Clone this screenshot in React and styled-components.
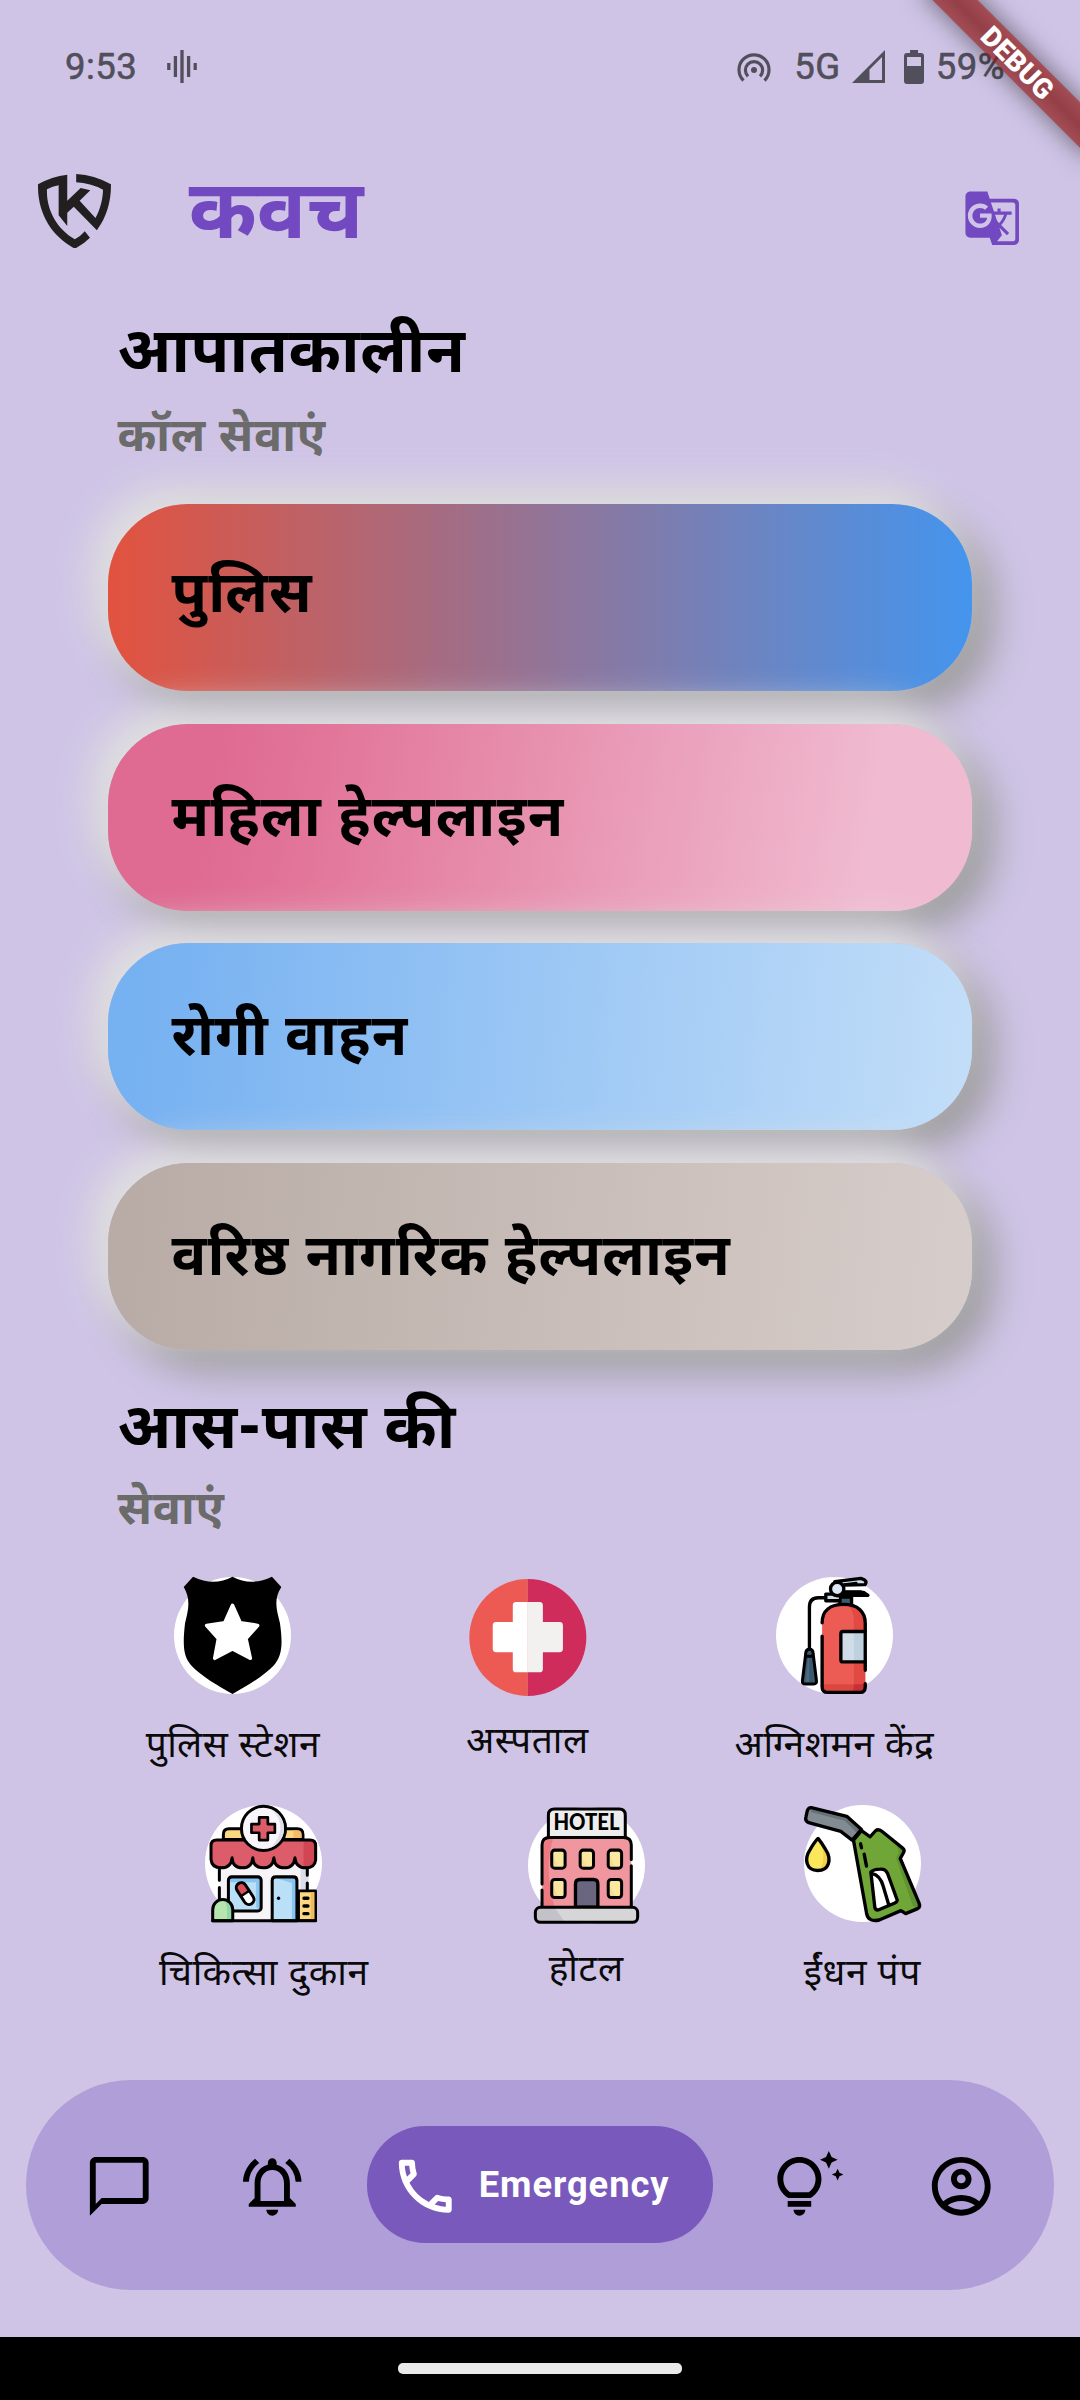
import React from "react";
import styled, { createGlobalStyle } from "styled-components";
import {
  MdOutlineChatBubbleOutline,
  MdOutlineNotificationsActive,
  MdOutlinePhone,
  MdOutlineTipsAndUpdates,
  MdOutlineAccountCircle,
  MdGTranslate,
} from "react-icons/md";

const GlobalStyle = createGlobalStyle`
  body { margin: 0; background: #cfc4e6; }
  * { box-sizing: border-box; }
`;

const hindi = `"Noto Sans Devanagari", "Noto Sans", sans-serif`;

const Page = styled.div`
  position: relative;
  display: flex;
  flex-direction: column;
  width: 1080px;
  height: 2400px;
  overflow: hidden;
  background: #cfc4e6;
  font-family: ${hindi};
  color: #000;
`;

const StatusBar = styled.div`
  display: flex;
  justify-content: space-between;
  align-items: center;
  height: 132px;
  padding: 1px 75px 0 65px;
  color: #524f5c;
  font: 400 36.5px/44px Roboto, sans-serif;
  -webkit-text-stroke: 0.6px #524f5c;
  letter-spacing: 0.5px;
`;

const StatusGroup = styled.div`
  display: flex;
  align-items: center;
  svg { display: block; }
`;

const Gap = styled.span`
  width: ${(p) => p.$w}px;
`;

const DebugBanner = styled.div`
  position: absolute;
  top: 46px;
  left: 897px;
  width: 240px;
  height: 32px;
  padding-left: 2px;
  transform: rotate(45deg);
  background: linear-gradient(rgba(144, 27, 24, 0.7), rgba(123, 7, 3, 0.7) 50%, rgba(144, 27, 24, 0.7));
  box-shadow: 0 0 26px rgba(0, 0, 0, 0.5);
  color: #fff;
  font: 900 28px/33px Roboto, sans-serif;
  text-align: center;
`;

const AppBar = styled.header`
  display: flex;
  align-items: center;
  height: 168px;
  padding: 0 58.5px 10px 38px;
`;

const Title = styled.h1`
  flex: 1;
  margin: 0 0 0 77.5px;
  padding-top: 13px;
  font-size: 82px;
  line-height: 120px;
  font-weight: 700;
  color: #7349c1;
`;

const TranslateButton = styled.div`
  display: flex;
  padding-top: 14px;
`;

const SectionHeader = styled.div`
  display: flex;
  flex-direction: column;
  height: ${(p) => p.$height}px;
  padding: ${(p) => p.$top}px 0 0 117.5px;
`;

const SectionTitle = styled.h2`
  margin: 0;
  font-size: 63.25px;
  line-height: 90px;
  font-weight: 700;
  letter-spacing: 0.6px;
`;

const SectionSubtitle = styled.p`
  margin: 0;
  font-size: 46.75px;
  line-height: ${(p) => p.$line}px;
  font-weight: 700;
  letter-spacing: 0.7px;
  color: #6b6b6b;
`;

const CardList = styled.div`
  display: flex;
  flex-direction: column;
  gap: 32.6px;
  padding: 0 108px;
`;

const CallCard = styled.div`
  display: flex;
  align-items: center;
  height: 187px;
  padding: ${(p) => p.$drop}px 63.5px 0;
  border-radius: 80px;
  background: ${(p) => p.$fill};
  box-shadow: -14px -14px 36px 3px #e0e0e0, 16px 16px 38px 4px #999999;
  font-size: 57.75px;
  line-height: 80px;
  font-weight: 700;
  letter-spacing: 1.15px;
`;

const ServiceRow = styled.div`
  display: flex;
  justify-content: space-evenly;
  height: 228px;
`;

const Service = styled.div`
  display: flex;
  flex-direction: column;
  align-items: center;
  padding-top: ${(p) => p.$drop || 0}px;
  svg { display: block; width: 117px; height: 117px; overflow: visible; }
`;

const ServiceLabel = styled.span`
  margin-top: ${(p) => p.$top}px;
  font-size: 37.1px;
  line-height: 56px;
  letter-spacing: 0.65px;
  color: #0a0a0a;
`;

const BottomNav = styled.nav`
  display: flex;
  align-items: center;
  height: 210px;
  margin: 47px 26px 0 25.5px;
  padding: 0 58.75px;
  border-radius: 105px;
  background: #b09ed9;
  svg { display: block; flex: none; }
`;

const NavItem = styled.div`
  display: flex;
  margin-right: ${(p) => p.$after || 0}px;
  padding-top: 2px;
`;

const ActiveItem = styled.div`
  display: flex;
  flex: none;
  align-items: center;
  width: 346px;
  height: 117px;
  margin: 0 59.5px 0 59.25px;
  padding-left: 23.2px;
  border-radius: 58px;
  background: #7a59bc;
  color: #fff;
  font: 700 36.3px/44px Roboto, sans-serif;
  letter-spacing: 0.95px;
  svg { margin: 2px 18px 0 0; }
`;

const GestureBar = styled.div`
  display: flex;
  justify-content: center;
  height: 63px;
  margin-top: auto;
  padding-top: 26px;
  background: #000;
`;

const Handle = styled.div`
  width: 284px;
  height: 11px;
  border-radius: 5px;
  background: #eaeaea;
`;

const WaveIcon = () => (
  <svg width="30" height="33" viewBox="0 0 30 33" stroke="#524f5c" strokeWidth="3.3">
    <path d="M1.8 13v7M8.4 6v21M15 0v33M21.6 6v21M28.2 13v7" />
  </svg>
);

const HotspotIcon = () => (
  <svg width="34" height="30" viewBox="0 0 34 30" fill="none" stroke="#524f5c" strokeWidth="3.2">
    <circle cx="17" cy="18" r="3" fill="#524f5c" stroke="none" />
    <path d="M6.5 28.5A15 15 0 1 1 27.5 28.5" />
    <path d="M11 24.3A8.6 8.6 0 1 1 23 24.3" />
  </svg>
);

const SignalIcon = () => (
  <svg width="33" height="33" viewBox="0 0 33 33" fill="#524f5c">
    <path fillRule="evenodd" d="M33 0V33H0ZM30 7L17.5 19.5V30H30Z" />
  </svg>
);

const BatteryIcon = () => (
  <svg width="20" height="34" viewBox="0 0 20 34" fill="#524f5c">
    <path fillRule="evenodd" d="M6 0H14V3H17Q20 3 20 6V31Q20 34 17 34H3Q0 34 0 31V6Q0 3 3 3H6ZM3 7V16H17V7Z" />
  </svg>
);

const ShieldLogo = () => (
  <svg width="73.3" height="74.7" viewBox="110 521 213 224" preserveAspectRatio="none" fill="#221f20">
    <path d="M195 523Q150 528 110 552C108 640 150 708 217 745Q242 732 261 712L246 693Q233 709 217 717C165 685 134 630 136 567Q152 558 170 555V645L195 677V637L214 619L281 690C310 650 323 600 322 552Q275 524 221 521V546Q262 548 299 568C298 600 290 628 277 653L231 601L262 570L234 563L195 601Z" />
  </svg>
);

const PoliceIcon = () => (
  <svg viewBox="165 52 350 350">
    <circle cx="340" cy="227" r="175" fill="#fff" />
    <path d="M222 51Q284 81 340 51Q396 81 458 51L486 82C462 120 472 150 482 190C492 260 486 290 464 316C432 350 385 376 340 402C295 376 248 350 216 316C194 290 190 260 198 190C208 150 216 120 194 82Z" />
    <path d="M340 137L363 189L415 197L380 236L393 295L340 267L287 295L298 236L263 197L317 189Z" fill="#fff" stroke="#fff" strokeWidth="11" strokeLinejoin="round" />
  </svg>
);

const HospitalIcon = () => (
  <svg viewBox="88 57 350 350">
    <path d="M264 57A175 175 0 0 0 264 407Z" fill="#ec5a53" />
    <path d="M264 57A175 175 0 0 1 264 407Z" fill="#cf2c5b" />
    <path d="M264 126H229Q219 126 219 136V186H169Q159 186 159 196V266Q159 276 169 276H219V326Q219 336 229 336H264Z" fill="#fff" />
    <path d="M264 126H299Q309 126 309 136V186H359Q369 186 369 196V266Q369 276 359 276H309V326Q309 336 299 336H264Z" fill="#f2f1ef" />
  </svg>
);

const FireIcon = () => (
  <svg viewBox="1008 52 350 350" strokeLinecap="round" strokeLinejoin="round">
    <circle cx="1183" cy="227" r="175" fill="#fff" />
    <path d="M1199 112H1234V136H1199Z" fill="#3b5a70" stroke="#000" strokeWidth="10" />
    <path d="M1146 190C1146 152 1170 134 1211 134C1252 134 1275 152 1275 190V380Q1275 397 1260 397H1161Q1146 397 1146 380Z" fill="#ec5b54" />
    <path d="M1220 136Q1241 148 1241 185V397H1260Q1275 397 1275 380V190Q1272 140 1220 136Z" fill="#e14a43" />
    <path d="M1150 373H1275V385Q1272 397 1260 397H1161Q1150 394 1150 373Z" fill="#dc4640" />
    <path d="M1241 373H1275V385Q1272 397 1260 397H1238Z" fill="#c73036" />
    <path d="M1202 217H1275V306H1202Z" fill="#d0dde9" />
    <path d="M1241 217H1275V306H1241Z" fill="#bfd1df" />
    <g fill="none" stroke="#000" strokeWidth="10">
      <path d="M1146 189C1146 152 1170 134 1211 134C1252 134 1275 155 1275 190V331" />
      <path d="M1146 229V380Q1146 397 1162 397H1260Q1275 397 1275 380V371" />
      <path d="M1275 215H1208Q1202 215 1202 222V300Q1202 306 1208 306H1275" />
      <path d="M1108 268V142Q1108 114 1135 114H1157" />
      <path d="M1190 103H1157V123H1199" fill="#d0dde9" />
      <path d="M1184 66L1262 56Q1284 62 1274 75L1213 76M1210 98H1270L1283 107H1206" fill="#d0dde9" />
    </g>
    <circle cx="1191" cy="88" r="20" fill="#dbe8f3" stroke="#000" strokeWidth="10" />
    <path d="M1213 75L1248 70M1213 96H1262" stroke="#000" strokeWidth="8" fill="none" />
    <path d="M1097 281Q1097 268 1108 268Q1119 268 1119 281L1129 362Q1130 372 1121 372H1096Q1086 372 1087 362Z" fill="#3b5a70" stroke="#000" strokeWidth="9" />
    <path d="M1104 294L1097 366H1107V294Z" fill="#4d6b7e" />
    <path d="M1098 289H1118" stroke="#000" strokeWidth="9" />
  </svg>
);

const PharmacyIcon = () => (
  <svg viewBox="198 75 350 350" strokeLinecap="round" strokeLinejoin="round">
    <circle cx="373" cy="250" r="175" fill="#fff" />
    <path d="M243 250H508V421H243Z" fill="#f6f4f7" />
    <path d="M484 250H508V330H484Z" fill="#dcdcea" />
    <path d="M253 178V163Q253 146 270 146H474Q491 146 491 163V178Z" fill="#fcd883" stroke="#000" strokeWidth="9" />
    <path d="M462 151H474Q487 151 487 163V174H462Z" fill="#f6bd66" />
    <path d="M216 197Q216 180 233 180H512Q529 180 529 197V240Q526 263 500 263Q470 263 467 233Q464 263 435 263Q406 263 404 233Q401 263 372 263Q343 263 341 233Q338 263 310 263Q281 263 279 233Q276 263 246 263Q218 263 216 238Z" fill="#dc5c69" />
    <path d="M493 182H512Q527 182 527 197V240Q524 260 500 261Q490 258 493 240Z" fill="#d04653" />
    <path d="M216 197Q216 180 233 180H512Q529 180 529 197V240Q526 263 500 263Q470 263 467 233Q464 263 435 263Q406 263 404 233Q401 263 372 263Q343 263 341 233Q338 263 310 263Q281 263 279 233Q276 263 246 263Q218 263 216 238Z" fill="none" stroke="#000" strokeWidth="9" />
    <circle cx="373" cy="145" r="66" fill="#f8f6fa" stroke="#000" strokeWidth="9" />
    <path d="M400 91Q450 145 395 202Q434 185 434 145Q432 108 400 91Z" fill="#dddded" />
    <path d="M360 112H386V132H407V158H386V180H360V158H337V132H360Z" fill="#dc5c69" stroke="#000" strokeWidth="8" />
    <path d="M241 268V300M241 322V360M504 265V285M504 308V330" stroke="#000" strokeWidth="9" fill="none" />
    <rect x="268" y="290" width="98" height="102" rx="10" fill="#b9e0f7" />
    <path d="M272 293H357Q364 293 364 300V388Q351 388 351 375V306H272Z" fill="#86c5f0" />
    <rect x="268" y="290" width="98" height="102" rx="10" fill="none" stroke="#000" strokeWidth="9" />
    <g transform="rotate(-33 318 340)">
      <rect x="303" y="304" width="30" height="72" rx="15" fill="#fff" />
      <path d="M303 340V319A15 15 0 0 1 333 319V340Z" fill="#dc4e5a" />
      <rect x="303" y="304" width="30" height="72" rx="15" fill="none" stroke="#000" strokeWidth="9" />
      <path d="M303 340H333" stroke="#000" strokeWidth="7" />
    </g>
    <path d="M399 421V301Q399 290 410 290H462Q473 290 473 301V421Z" fill="#b9e0f7" />
    <path d="M408 293H462Q470 294 470 301V420H458V308Z" fill="#86c5f0" />
    <path d="M399 421V301Q399 290 410 290H462Q473 290 473 301V421Z" fill="none" stroke="#000" strokeWidth="9" />
    <circle cx="418" cy="354" r="5" />
    <path d="M478 332H529V421H478Z" fill="#fcd883" stroke="#000" strokeWidth="8" />
    <path d="M514 336H525V417H514Z" fill="#f0bb5e" />
    <path d="M494 354H506M494 377H506M494 400H506" stroke="#000" strokeWidth="10" />
    <path d="M221 421V388A30 30 0 0 1 281 388V421Z" fill="#b6e6ab" />
    <path d="M256 361Q277 368 277 390V418H264V390Q264 370 256 361Z" fill="#8fd6a8" />
    <path d="M221 421V388A30 30 0 0 1 281 388V421Z" fill="none" stroke="#000" strokeWidth="9" />
    <path d="M221 421H529" stroke="#000" strokeWidth="9" />
  </svg>
);

const Window = ({ x, y }) => (
  <>
    <rect x={x} y={y} width="40" height="54" rx="9" fill="#fbe8a0" />
    <path d={`M${x + 4} ${y + 4}Q${x + 8} ${y + 40} ${x + 24} ${y + 50}H${x + 4}Z`} fill="#f5dc92" />
    <rect x={x} y={y} width="40" height="54" rx="9" fill="none" stroke="#000" strokeWidth="9" />
  </>
);

const HotelIcon = () => (
  <svg viewBox="85 80 350 350" strokeLinecap="round" strokeLinejoin="round">
    <circle cx="260" cy="255" r="175" fill="#fff" />
    <path d="M127 380V194Q127 171 150 171H371Q394 171 394 194V380Z" fill="#f0969e" />
    <path d="M131 380V194Q134 175 160 175Q132 260 164 380Z" fill="#ed7a80" />
    <path d="M127 310V194Q127 171 150 171H371Q394 171 394 194V237M127 328V380M394 256V380" fill="none" stroke="#000" strokeWidth="9" />
    <path d="M146 171V104Q146 86 164 86H358Q376 86 376 104V171Z" fill="#ededed" stroke="#000" strokeWidth="9" />
    <text x="260" y="150" textAnchor="middle" textLength="198" lengthAdjust="spacingAndGlyphs" fontFamily="Lato, sans-serif" fontWeight="900" fontSize="66">HOTEL</text>
    <Window x={156} y={209} />
    <Window x={241} y={209} />
    <Window x={325} y={209} />
    <Window x={156} y={297} />
    <Window x={325} y={297} />
    <path d="M227 380V310Q227 297 240 297H281Q294 297 294 310V380Z" fill="#6a6680" stroke="#000" strokeWidth="10" />
    <rect x="107" y="380" width="306" height="45" rx="15" fill="#d6d6d8" />
    <path d="M122 382H166L194 423H122Q109 420 109 402Q109 385 122 382Z" fill="#c3c2c8" />
    <rect x="107" y="380" width="306" height="45" rx="15" fill="none" stroke="#000" strokeWidth="9" />
  </svg>
);

const FuelIcon = () => (
  <svg viewBox="912 75 350 350" strokeLinecap="round" strokeLinejoin="round">
    <circle cx="1087" cy="250" r="175" fill="#fff" />
    <path d="M934 83L1040 109L1084 148L1056 180L1022 154L926 128Q914 122 918 110L922 92Q926 82 934 83Z" fill="#818b91" />
    <path d="M934 85L1040 111L1080 150L1072 160L1034 122L932 96Z" fill="#667077" />
    <path d="M934 83L1040 109L1084 148L1056 180L1022 154L926 128Q914 122 918 110L922 92Q926 82 934 83Z" fill="none" stroke="#000" strokeWidth="10" />
    <path d="M1084 152L1110 170L1126 152Q1134 146 1144 153L1207 204Q1214 210 1210 217L1200 235L1256 368Q1261 380 1252 385L1216 400L1202 391L1137 419Q1103 426 1099 398L1060 180Z" fill="#70a537" />
    <path d="M1190 198L1207 208L1200 235L1256 372L1246 382L1238 378L1188 236L1196 214Z" fill="#5f9330" />
    <path d="M1084 152L1110 170L1126 152Q1134 146 1144 153L1207 204Q1214 210 1210 217L1200 235L1256 368Q1261 380 1252 385L1216 400L1202 391L1137 419Q1103 426 1099 398L1060 180Z" fill="none" stroke="#000" strokeWidth="10" />
    <path d="M1112 276Q1120 267 1140 267Q1156 266 1162 280L1191 360Q1190 366 1184 368L1134 389Q1126 390 1124 382Z" fill="#fff" stroke="#000" strokeWidth="10" />
    <path d="M1116 280Q1140 285 1149 318L1165 372" fill="none" stroke="#000" strokeWidth="10" />
    <path d="M1081 191L1084 203M1092 222L1099 258" stroke="#000" strokeWidth="10" />
    <path d="M954 175Q964 187 976 207C997 239 986 271 953 271C920 271 910 239 931 207Q944 185 954 175Z" fill="#fbe75c" />
    <path d="M958 186Q980 225 962 267Q986 262 985 236Q980 215 958 186Z" fill="#f4cf4f" />
    <path d="M954 175Q964 187 976 207C997 239 986 271 953 271C920 271 910 239 931 207Q944 185 954 175Z" fill="none" stroke="#000" strokeWidth="10" />
  </svg>
);

const calls = [
  { text: "पुलिस", fill: "linear-gradient(90deg, #e2523e, #4495ee)", drop: 0 },
  { text: "महिला हेल्पलाइन", fill: "linear-gradient(100deg, #df6a92 12%, #e27599 24%, #f0bbd0 88%)", drop: 10 },
  { text: "रोगी वाहन", fill: "linear-gradient(95deg, #76b1f1 4%, #c1ddf8 98%)", drop: 9 },
  { text: "वरिष्ठ नागरिक हेल्पलाइन", fill: "linear-gradient(95deg, #b9aca6 3%, #d6ccc9 97%)", drop: 9 },
];

const rows = [
  [
    { text: "पुलिस स्टेशन", Icon: PoliceIcon, top: 26 },
    { text: "अस्पताल", Icon: HospitalIcon, drop: 2, top: 20 },
    { text: "अग्निशमन केंद्र", Icon: FireIcon, top: 26 },
  ],
  [
    { text: "चिकित्सा दुकान", Icon: PharmacyIcon, top: 26 },
    { text: "होटल", Icon: HotelIcon, drop: 1.7, top: 20 },
    { text: "ईंधन पंप", Icon: FuelIcon, top: 26 },
  ],
];

export default function App() {
  return (
    <Page>
      <GlobalStyle />
      <StatusBar>
        <StatusGroup>
          9:53
          <Gap $w={30} />
          <WaveIcon />
        </StatusGroup>
        <StatusGroup>
          <HotspotIcon />
          <Gap $w={23} />
          5G
          <Gap $w={11} />
          <SignalIcon />
          <Gap $w={19} />
          <BatteryIcon />
          <Gap $w={12} />
          59%
        </StatusGroup>
      </StatusBar>
      <DebugBanner>DEBUG</DebugBanner>
      <AppBar>
        <ShieldLogo />
        <Title>कवच</Title>
        <TranslateButton>
          <MdGTranslate size={58.4} color="#7349c1" />
        </TranslateButton>
      </AppBar>
      <SectionHeader $height={204} $top={12.4}>
        <SectionTitle>आपातकालीन</SectionTitle>
        <SectionSubtitle $line={76}>कॉल सेवाएं</SectionSubtitle>
      </SectionHeader>
      <CardList>
        {calls.map((c) => (
          <CallCard key={c.text} $fill={c.fill} $drop={c.drop}>
            {c.text}
          </CallCard>
        ))}
      </CardList>
      <SectionHeader $height={227.2} $top={38}>
        <SectionTitle>आस-पास की</SectionTitle>
        <SectionSubtitle $line={70}>सेवाएं</SectionSubtitle>
      </SectionHeader>
      {rows.map((row, i) => (
        <ServiceRow key={i}>
          {row.map(({ text, Icon, drop, top }) => (
            <Service key={text} $drop={drop}>
              <Icon />
              <ServiceLabel $top={top}>{text}</ServiceLabel>
            </Service>
          ))}
        </ServiceRow>
      ))}
      <BottomNav>
        <NavItem $after={82.5}>
          <MdOutlineChatBubbleOutline size={70.5} />
        </NavItem>
        <NavItem>
          <MdOutlineNotificationsActive size={70.5} />
        </NavItem>
        <ActiveItem>
          <MdOutlinePhone size={70.5} />
          Emergency
        </ActiveItem>
        <NavItem $after={82.5}>
          <MdOutlineTipsAndUpdates size={70.5} />
        </NavItem>
        <NavItem>
          <MdOutlineAccountCircle size={70.5} />
        </NavItem>
      </BottomNav>
      <GestureBar>
        <Handle />
      </GestureBar>
    </Page>
  );
}
